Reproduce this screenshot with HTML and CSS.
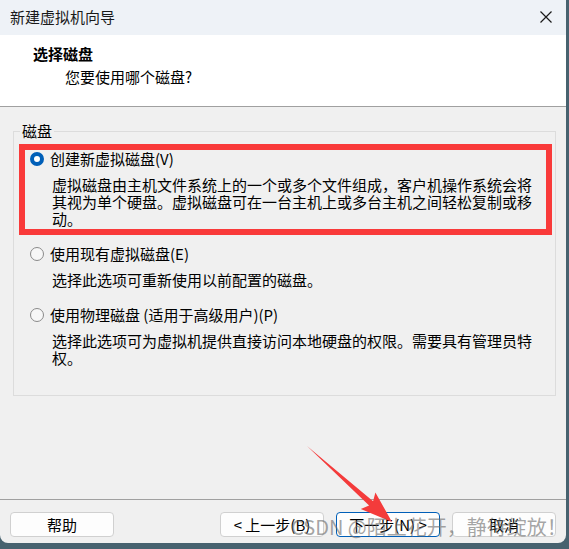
FILE: index.html
```html
<!DOCTYPE html>
<html lang="zh-CN">

<head>
    <meta charset="UTF-8">
    <meta name="viewport" content="width=device-width, initial-scale=1.0">
    <link rel="stylesheet" href="styles.css">
</head>

<body>
    <div class="window">
        <div class="titlebar">
            <span class="title">新建虚拟机向导</span>
            <svg class="close" width="12" height="12" viewBox="0 0 12 12">
                <path d="M0.5 0.5 L11.5 11.5 M11.5 0.5 L0.5 11.5" stroke="#1a1a1a" stroke-width="1.2" fill="none" />
            </svg>
        </div>

        <div class="header">
            <div class="header-title">选择磁盘</div>
            <div class="header-sub">您要使用哪个磁盘?</div>
        </div>

        <div class="content">
            <fieldset class="group">
                <legend>磁盘</legend>

                <div class="option highlight">
                    <div class="option-row"><span class="radio checked"></span><span>创建新虚拟磁盘(V)</span></div>
                    <div class="option-desc">虚拟磁盘由主机文件系统上的一个或多个文件组成，客户机操作系统会将其视为单个硬盘。虚拟磁盘可在一台主机上或多台主机之间轻松复制或移动。</div>
                </div>

                <div class="option">
                    <div class="option-row"><span class="radio"></span><span>使用现有虚拟磁盘(E)</span></div>
                    <div class="option-desc">选择此选项可重新使用以前配置的磁盘。</div>
                </div>

                <div class="option">
                    <div class="option-row"><span class="radio"></span><span>使用物理磁盘 (适用于高级用户)(P)</span></div>
                    <div class="option-desc">选择此选项可为虚拟机提供直接访问本地硬盘的权限。需要具有管理员特权。</div>
                </div>
            </fieldset>
        </div>

        <div class="footer">
            <button class="btn">帮助</button>
            <div class="spacer"></div>
            <button class="btn">&lt; 上一步(B)</button>
            <button class="btn default">下一步(N) &gt;</button>
            <button class="btn">取消</button>
        </div>

        <!-- annotation arrow and watermark over the dialog -->
        <svg class="arrow" width="566" height="543" viewBox="0 0 566 543">
            <polygon points="307,446 373.1,501.2 375.4,492.5 392,522 360.8,508.9 369.1,505.6" fill="#f43b3b" />
        </svg>
        <div class="watermark">CSDN @陌上花开，静待绽放！</div>
    </div>
</body>

</html>
```

FILE: styles.css
```css
body {
    margin: 0;
    background-color: #47626f;
    font-family: "Noto Sans CJK SC", "Noto Sans", sans-serif;
    font-size: 15px;
    color: #000;
}

.window {
    position: relative;
    width: 566px;
    height: 543px;
    display: flex;
    flex-direction: column;
    background: #f0f0f0;
    border-radius: 0 0 8px 8px;
    overflow: hidden;
}

/* Title bar */
.titlebar {
    height: 35px;
    flex: none;
    display: flex;
    align-items: center;
    justify-content: space-between;
    padding: 0 14px 0 10px;
    background: #eef2f7;
}

.title {
    line-height: 20px;
    margin-top: -2px;
    color: #1a1a1a;
}

.close {
    margin-top: -2px;
}

/* Wizard header */
.header {
    flex: none;
    height: 72px;
    box-sizing: border-box;
    padding: 9px 0 0 33px;
    background: #fff;
    border-bottom: 1px solid #a0a0a0;
}

.header-title {
    font-weight: bold;
    line-height: 20px;
}

.header-sub {
    margin: 3px 0 0 32px;
    line-height: 20px;
}

/* Group box */
.content {
    flex: 1;
}

.group {
    margin: 14px 10px 0 13px;
    padding: 0 3px 21px 5px;
    border: 1px solid #dcdcdc;
}

.group legend {
    margin-left: 1px;
    padding: 0 2px;
    line-height: 20px;
}

.option {
    margin-top: 4px;
    padding: 0 0 2px 5px;
    border: 6px solid transparent;
}

.option.highlight {
    margin-top: 3px;
    border-color: #f93a3a;
}

.option-row {
    display: flex;
    align-items: center;
    line-height: 18px;
}

.radio {
    width: 14px;
    height: 14px;
    box-sizing: border-box;
    margin-right: 6px;
    border: 1px solid #8a8a8a;
    border-radius: 50%;
    background: #f7f7f7;
}

.radio.checked {
    border: 4px solid #005fb8;
    background: #fff;
}

.option-desc {
    margin-top: 8px;
    padding: 0 8px 0 22px;
    line-height: 17px;
}

/* Footer buttons */
.footer {
    flex: none;
    display: flex;
    gap: 12px;
    padding: 12px 10px 6px 10px;
    border-top: 1px solid #a0a0a0;
}

.spacer {
    flex: 1;
}

.btn {
    width: 104px;
    height: 25px;
    padding: 0;
    font-family: "Noto Sans CJK SC", "Noto Sans", sans-serif;
    font-size: 15px;
    line-height: 20px;
    color: #000;
    background: #fdfdfd;
    border: 1px solid #d0d0d0;
    border-radius: 4px;
}

.btn.default {
    border-color: #005fb8;
}

.arrow {
    position: absolute;
    left: 0;
    top: 0;
}

.watermark {
    position: absolute;
    left: 291px;
    top: 513px;
    font-size: 20px;
    line-height: 28px;
    color: rgba(105, 105, 105, 0.6);
    white-space: nowrap;
}
```
